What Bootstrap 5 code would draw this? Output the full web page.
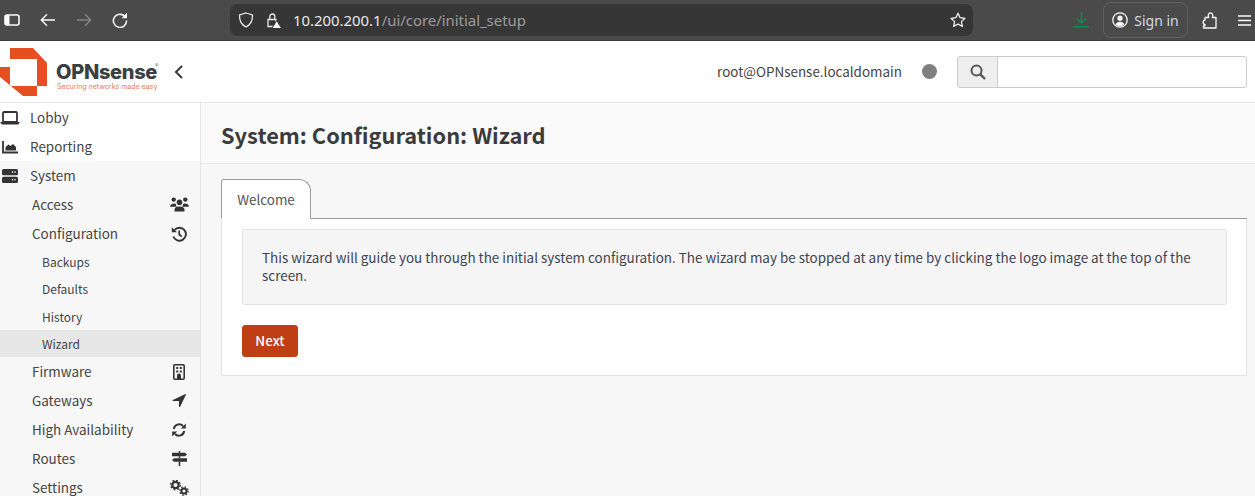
<!DOCTYPE html>
<html lang="en">
<head>
<meta charset="utf-8">
<title>OPNsense</title>
<link href="https://cdn.jsdelivr.net/npm/bootstrap@5.3.0/dist/css/bootstrap.min.css" rel="stylesheet">
<style>
html,body{height:100%;overflow:hidden}
body{font-family:"Noto Sans CJK SC","Liberation Sans",sans-serif;font-size:13.45px;color:#3c3c3c;background:#f7f7f7}
.chromebar{height:41px;background:#4a4a4a;border-bottom:1px solid #3d3d3d;font-family:"Noto Sans",sans-serif;color:#fbfbfe;flex:none}
.chromebar svg{display:block;flex:none}
.cb-slot{width:36px;display:flex;justify-content:center;flex:none}
.cb-first{width:24px;margin-right:6px}
.cb-puzzle{margin-left:3px}
.cb-menu{width:20px;margin-left:7px}
.urlbar{width:743px;height:32px;background:#363636;border-radius:8px;margin-left:92px;padding:0 7px 0 8px;flex:none}
.lockico{margin-left:11px}
.urltext{font-size:14.9px;margin-left:11px;color:#e8e8ea}
.urltext span{color:#9d9d9f}
.dlslot{width:130px;padding-right:13px;flex:none}
.signin{width:85px;height:36px;border:1px solid #5f5f5f;border-radius:8px;font-size:14px;color:#cfd8e6;gap:6px;flex:none}
.topbar{height:62px;background:#fff;border-bottom:1px solid #e8e8e8;padding:0 8px 0 0;flex:none}
.brand{width:160px;height:54px;position:relative;margin-top:2px}
.brandmark{position:absolute;left:0;top:2px}
.brandname{position:absolute;left:56px;top:15px;font:800 20px/22px "Inter","Liberation Sans",sans-serif;color:#3a3f42;letter-spacing:-.3px}
.brandreg{position:absolute;left:155px;top:16px;font-size:7px;line-height:8px;color:#666}
.brandtag{position:absolute;left:57px;top:36px;font:7px/9px "Inter","Liberation Sans",sans-serif;color:#ec7a57;white-space:nowrap}
.backchev{margin-left:14px}
.usertext{font-size:13.45px;color:#444;margin-right:20px}
.statusdot{width:15px;height:15px;border-radius:50%;background:#7f7f7f;margin-right:20px}
.searchgrp{width:290px;height:32px}
.searchgrp .input-group-text{width:41px;background:#eee;border-color:#ccc;padding:0;justify-content:center;border-radius:3px 0 0 3px}
.searchgrp .form-control{height:32px;border-color:#ccc;border-radius:0 3px 3px 0}
.mainrow{min-height:0;flex:1 1 0}
.sidemenu{width:201px;flex:none;background:#f7f7f7;border-right:1px solid #e5e5e5;overflow:hidden}
.sideitem{height:29px;display:flex;align-items:center;color:#444;white-space:nowrap}
.sideitem svg{flex:none;display:block}
.lvl0{padding-left:0;font-size:13.45px}
.lvl0 .ico0{width:30px;display:flex}
.lvl0.wht{background:#fff}
.lvl1{padding:0 11px 0 32px;justify-content:space-between;font-size:13.45px}
.ico1{width:20px;display:flex;justify-content:center}
.lvl2{height:27.25px;padding-left:42px;padding-top:1px;font-size:12px}
.lvl2.on{background:#e7e7e7}
.contentcol{min-width:0;flex:1 1 0}
.pagehead{height:61px;background:#fafafa;border-bottom:1px solid #e8e8e8;padding-left:20px;display:flex;align-items:center}
.pagehead h1{font-size:21.8px;font-weight:600;margin:0;color:#3b3b3b;line-height:1;position:relative;top:2px}
.contentpad{padding:15px 8px 0 20px}
.wiztabs{border-bottom:1px solid #9a9a9a;height:40px}
.wiztabs .nav-link,.wiztabs .nav-link.active{height:40px;width:90px;padding:0;display:flex;align-items:center;justify-content:center;color:#555;background:#fff;border:1px solid #9a9a9a;border-bottom-color:#fff;border-radius:3px 12px 0 0;font-size:13.45px}
.wizpane{background:#fff;border:1px solid #e3e3e3;border-top:0;height:157px;padding:10px 19px 0 20px}
.wizwell{background:#f5f5f5;border:1px solid #e3e3e3;border-radius:2px;height:76px;padding:18px 19px 0;font-size:13.45px;line-height:18px;color:#3e4450;margin-bottom:20px}
.nextbtn{width:56px;height:32px;padding:0 0 2px;background:#c03e14;border:1px solid #c03e14;color:#fff;font-size:13.45px;font-weight:500;border-radius:3px}
</style>
</head>
<body class="d-flex flex-column">
<div class="chromebar d-flex align-items-center">
  <div class="cb-slot cb-first">
    <svg width="16" height="12" viewBox="0 0 16 12"><rect x="1" y="1" width="14" height="10" rx="2" fill="none" stroke="#fbfbfe" stroke-width="1.6"/><rect x="1" y="1" width="4.5" height="10" rx="1" fill="#fbfbfe"/></svg>
  </div>
  <div class="cb-slot">
    <svg width="16" height="14" viewBox="0 0 16 14"><path d="M15 7H1.5M7 1.2 1.3 7 7 12.8" fill="none" stroke="#fbfbfe" stroke-width="1.4"/></svg>
  </div>
  <div class="cb-slot">
    <svg width="16" height="14" viewBox="0 0 16 14"><path d="M1 7h13.5M9 1.2 14.7 7 9 12.8" fill="none" stroke="#868686" stroke-width="1.4"/></svg>
  </div>
  <div class="cb-slot">
    <svg width="16" height="16" viewBox="0 0 16 16"><path d="M13.4 5A6.6 6.6 0 1 0 14.6 8.6" fill="none" stroke="#fbfbfe" stroke-width="1.5"/><path d="M15 .8v5.4H9.6z" fill="#fbfbfe"/></svg>
  </div>
  <div class="urlbar d-flex align-items-center">
    <svg width="16" height="16" viewBox="0 0 16 16"><path d="M8 1 14.5 3c.2 5.500-1.800 9.700-6.500 12C3.300 12.700 1.300 8.500 1.500 3z" fill="none" stroke="#e8e8ea" stroke-width="1.3"/></svg>
    <svg width="17" height="17" viewBox="0 0 17 17" class="lockico"><path d="M3 7.500h8v7H3zM4.800 7.500V4.500a2.500 2.500 0 0 1 5 0v3" fill="none" stroke="#e8e8ea" stroke-width="1.300"/><path d="M11.700 8.500l5 8h-9.800z" fill="#fbfbfe" stroke="#363636"/></svg>
    <div class="urltext">10.200.200.1<span>/ui/core/initial_setup</span></div>
    <svg class="ms-auto" width="16" height="16" viewBox="0 0 16 16"><path d="M8 1.200l2.100 4.500 4.900.6-3.600 3.300 1 4.800L8 12l-4.400 2.400 1-4.800L1 6.300l4.900-.6z" fill="none" stroke="#fbfbfe" stroke-width="1.200" stroke-linejoin="round"/></svg>
  </div>
  <div class="dlslot d-flex justify-content-end align-items-center">
    <svg width="17" height="16" viewBox="0 0 17 16"><path d="M8.500 0v10.500M4 6.500 8.500 11 13 6.500M1 14.800h15" fill="none" stroke="#0c8a5c" stroke-width="1.500"/></svg>
  </div>
  <div class="signin d-flex align-items-center justify-content-center">
    <svg width="16" height="16" viewBox="0 0 16 16"><circle cx="8" cy="8" r="7.200" fill="none" stroke="#fbfbfe" stroke-width="1.300"/><circle cx="8" cy="6.200" r="2.600" fill="#fbfbfe"/><path d="M3.500 12.500c1-2 2.600-2.800 4.500-2.800s3.500.8 4.500 2.800A6.500 6.500 0 0 1 8 14.300a6.500 6.500 0 0 1-4.500-1.800z" fill="#fbfbfe"/></svg>
    <span>Sign in</span>
  </div>
  <div class="cb-slot cb-puzzle">
    <svg width="15" height="17" viewBox="0 0 15 17"><path d="M1.500 16H14V5.500H10.300c.9-1.600.6-4.500-1.800-4.500S5.800 3.900 6.700 5.500H3V8C.5 8 .5 12.500 3 12.500V13.800H1.500z" fill="none" stroke="#fbfbfe" stroke-width="1.300" stroke-linejoin="round"/></svg>
  </div>
  <div class="cb-slot cb-menu">
    <svg width="13" height="11" viewBox="0 0 13 11"><path d="M0 1h13M0 5.500h13M0 10h13" stroke="#fbfbfe" stroke-width="1.400"/></svg>
  </div>
</div>

<nav class="topbar navbar d-flex flex-nowrap align-items-center">
  <div class="d-flex align-items-center">
    <div class="brand">
      <svg class="brandmark" width="48" height="50" viewBox="0 0 48 50"><path d="M10 0H33L47 15V38H37V11H10z" fill="#e64f22"/><path d="M0 19H10V38H37V48H23L0 29z" fill="#e64f22"/></svg>
      <span class="brandname">OPNsense</span>
      <span class="brandreg">®</span>
      <span class="brandtag">Securing networks made easy</span>
    </div>
    <svg class="backchev" width="10" height="14" viewBox="0 0 10 14"><path d="M8 1 2 7l6 6" fill="none" stroke="#3a3a3a" stroke-width="2"/></svg>
  </div>
  <div class="d-flex align-items-center">
    <span class="usertext">root@OPNsense.localdomain</span>
    <span class="statusdot"></span>
    <div class="input-group searchgrp flex-nowrap">
      <span class="input-group-text">
        <svg width="16" height="16" viewBox="0 0 16 16"><circle cx="6.500" cy="6.500" r="5" fill="none" stroke="#555" stroke-width="2"/><path d="M10.300 10.300 15 15" stroke="#555" stroke-width="2.400"/></svg>
      </span>
      <input class="form-control" type="text" aria-label="Search">
    </div>
  </div>
</nav>

<div class="mainrow d-flex">
  <aside class="sidemenu">
    <a class="sideitem lvl0 wht text-decoration-none"><span class="ico0"><svg width="20" height="14" viewBox="0 0 20 14"><rect x="3" y="1" width="14" height="10" rx="1" fill="none" stroke="#333" stroke-width="1.800"/><path d="M.5 11h19v1l-1.500 1.500H2L.5 12z" fill="#333"/></svg></span>Lobby</a>
    <a class="sideitem lvl0 wht text-decoration-none"><span class="ico0"><svg width="18" height="14" viewBox="0 0 18 14"><path d="M3 1v11.500h15" fill="none" stroke="#333" stroke-width="1.800"/><path d="M5.500 10.500V7l3-2.500 2 1.500 2.500-2 3 3v3.500z" fill="#333"/></svg></span>Reporting</a>
    <a class="sideitem lvl0 text-decoration-none"><span class="ico0"><svg width="18" height="14" viewBox="0 0 18 14"><rect x="2" width="16" height="6.300" rx="1.500" fill="#333"/><rect x="2" y="7.700" width="16" height="6.300" rx="1.500" fill="#333"/><circle cx="15" cy="3.100" r=".8" fill="#f7f7f7"/><circle cx="12.500" cy="3.100" r=".8" fill="#f7f7f7"/><circle cx="15" cy="10.800" r=".8" fill="#f7f7f7"/><circle cx="12.500" cy="10.800" r=".8" fill="#f7f7f7"/></svg></span>System</a>
    <a class="sideitem lvl1 text-decoration-none">Access<span class="ico1"><svg width="19" height="15" viewBox="0 0 19 15"><circle cx="3.700" cy="2.600" r="2.200" fill="#333"/><circle cx="15.300" cy="2.600" r="2.200" fill="#333"/><circle cx="9.500" cy="5.200" r="2.800" fill="#333"/><path d="M0 9.800C0 6.500 6 5.500 6 7.800c0 .8.600 1.500 1 2H0zM19 9.800c0-3.300-6-4.300-6-2 0 .8-.6 1.500-1 2zM4.500 14.500v-2c0-2 2-3 5-3s5 1 5 3v2z" fill="#333"/></svg></span></a>
    <a class="sideitem lvl1 text-decoration-none">Configuration<span class="ico1"><svg width="16" height="16" viewBox="0 0 16 16"><path d="M3.500 4A6.500 6.500 0 1 1 2.300 10.500" fill="none" stroke="#333" stroke-width="1.900"/><path d="M.8 1.200 6 6.200H.8z" fill="#333"/><path d="M8.200 4.500v4l2.500 2" fill="none" stroke="#333" stroke-width="1.700"/></svg></span></a>
    <a class="sideitem lvl2 text-decoration-none">Backups</a>
    <a class="sideitem lvl2 text-decoration-none">Defaults</a>
    <a class="sideitem lvl2 text-decoration-none">History</a>
    <a class="sideitem lvl2 on text-decoration-none">Wizard</a>
    <a class="sideitem lvl1 text-decoration-none">Firmware<span class="ico1"><svg width="12" height="16" viewBox="0 0 12 16"><rect x=".8" y=".8" width="10.400" height="14.400" rx="1.200" fill="none" stroke="#333" stroke-width="1.600"/><path d="M3.200 3h2v2h-2zM6.800 3h2v2h-2zM3.200 6.500h2v2h-2zM6.800 6.500h2v2h-2zM4 15v-3.500a2 2 0 0 1 4 0V15z" fill="#333"/></svg></span></a>
    <a class="sideitem lvl1 text-decoration-none">Gateways<span class="ico1"><svg width="14" height="14" viewBox="0 0 14 14"><path d="M13.500.5 7.500 13V6.500H.8z" fill="#333" stroke="#333" stroke-linejoin="round"/></svg></span></a>
    <a class="sideitem lvl1 text-decoration-none">High Availability<span class="ico1"><svg width="14" height="14" viewBox="0 0 14 14"><path d="M1.800 6A5.400 5.400 0 0 1 11 3M12.200 8A5.400 5.400 0 0 1 3 11" fill="none" stroke="#333" stroke-width="2"/><path d="M13.800.5v5h-5zM.2 13.500v-5h5z" fill="#333"/></svg></span></a>
    <a class="sideitem lvl1 text-decoration-none">Routes<span class="ico1"><svg width="15" height="15" viewBox="0 0 15 15"><path d="M0 1.800h13l2 1.700-2 1.700H0zM15 7.300H2L0 9l2 1.700h13z" fill="#333"/><path d="M6.700 0h1.600v1.800H6.700zM6.700 5.200h1.600v2.100H6.700zM6.700 10.700h1.600V15H6.700z" fill="#333"/></svg></span></a>
    <a class="sideitem lvl1 text-decoration-none">Settings<span class="ico1"><svg width="19" height="16" viewBox="0 0 19 16"><circle cx="5.500" cy="5" r="3.200" fill="none" stroke="#333" stroke-width="2.200"/><circle cx="5.500" cy="5" r="4.800" fill="none" stroke="#333" stroke-width="1.300" stroke-dasharray="1.800 1.970"/><circle cx="14" cy="11" r="2.600" fill="none" stroke="#333" stroke-width="2"/><circle cx="14" cy="11" r="4.200" fill="none" stroke="#333" stroke-width="1.200" stroke-dasharray="1.600 1.700"/></svg></span></a>
  </aside>
  <main class="contentcol">
    <header class="pagehead"><h1>System: Configuration: Wizard</h1></header>
    <div class="contentpad">
      <ul class="nav nav-tabs wiztabs">
        <li class="nav-item"><a class="nav-link active">Welcome</a></li>
      </ul>
      <div class="wizpane">
        <div class="wizwell">This wizard will guide you through the initial system configuration. The wizard may be stopped at any time by clicking the logo image at the top of the screen.</div>
        <button class="btn nextbtn" type="button">Next</button>
      </div>
    </div>
  </main>
</div>
</body>
</html>
